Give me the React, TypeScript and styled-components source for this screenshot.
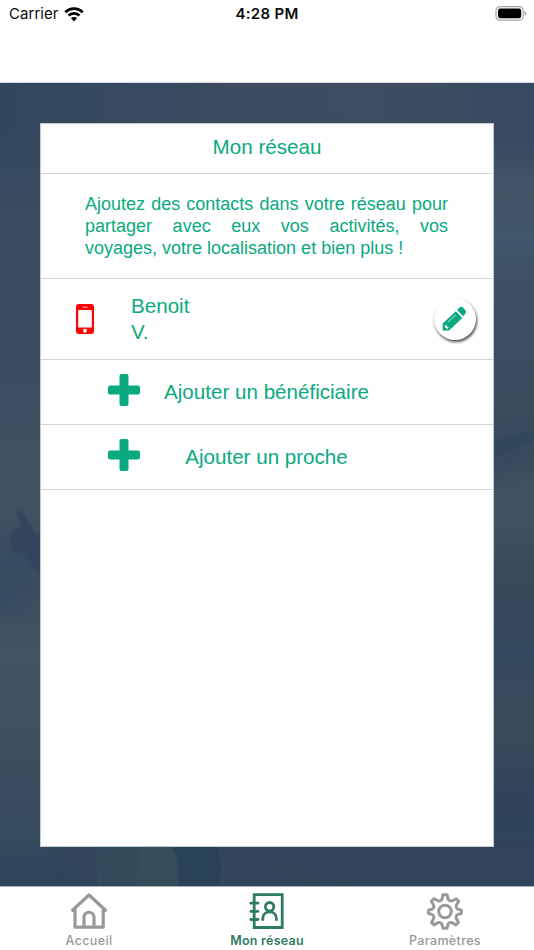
import React from "react";
import styled, { createGlobalStyle } from "styled-components";

const GREEN = "#09aa80";
const TAB_GREEN = "#2f7a65";
const TAB_GREY = "#999999";
const LINE = "#d3d3d5";

const GlobalStyle = createGlobalStyle`
  * { box-sizing: border-box; }
  body { margin: 0; background: #fff; }
  button { border: 0; padding: 0; background: none; font: inherit; color: inherit; }
`;

const Screen = styled.div`
  display: flex;
  flex-direction: column;
  width: 534px;
  height: 950px;
  overflow: hidden;
  background: #fff;
  font-family: "Liberation Sans", Arial, sans-serif;
`;

const StatusBar = styled.header`
  display: grid;
  flex-shrink: 0;
  grid-template-columns: 1fr auto 1fr;
  align-items: center;
  height: 28px;
  padding: 0 7px 0 9px;
  font: 400 15px/20px Inter, sans-serif;
  color: #0c0c0c;
`;

const Carrier = styled.div`
  display: flex;
  align-items: center;
  gap: 5px;
  letter-spacing: 0.05px;
`;

const Clock = styled.time`
  margin-right: 2px;
  font-weight: 600;
  letter-spacing: 0.3px;
`;

const Battery = styled.div`
  display: flex;
  justify-content: flex-end;
  padding-bottom: 1px;
`;

const NavBar = styled.div`
  flex-shrink: 0;
  height: 55px;
  border-bottom: 1px solid #d6d6d6;
`;

const Stage = styled.main`
  position: relative;
  flex: 1;
  padding: 40px 40px 39px;
  background: #394c60;
`;

const Scenery = styled.svg`
  position: absolute;
  inset: 0;
  width: 100%;
  height: 100%;
`;

const Card = styled.section`
  position: relative;
  height: 724px;
  border: 1px solid #c5cad0;
  background: #fff;
  color: ${GREEN};
`;

const Title = styled.h1`
  display: flex;
  align-items: center;
  justify-content: center;
  height: 50px;
  margin: 0;
  padding-bottom: 3px;
  border-bottom: 1px solid ${LINE};
  font-size: 20.6px;
  font-weight: 400;
`;

const Intro = styled.p`
  height: 105px;
  margin: 0;
  padding: 19px 45px 0 44px;
  border-bottom: 1px solid ${LINE};
  font-size: 18px;
  line-height: 22px;
  text-align: justify;
`;

const ContactRow = styled.div`
  display: flex;
  align-items: center;
  height: 81px;
  padding: 0 17px 0 34px;
  border-bottom: 1px solid ${LINE};
`;

const ContactName = styled.div`
  width: 80px;
  margin: 0 auto 0 36px;
  font-size: 20.6px;
  line-height: 26px;
`;

const EditButton = styled.button`
  display: grid;
  place-items: center;
  width: 42px;
  height: 42px;
  border-radius: 50%;
  background: #fff;
  box-shadow: 1px 2px 3px rgba(0, 0, 0, 0.7);
`;

const AddRow = styled.button`
  display: grid;
  grid-template-columns: 34px 1fr;
  align-items: center;
  width: 100%;
  height: 65px;
  padding: 0 108px 0 66px;
  border-bottom: 1px solid ${LINE};
  font-size: 20.6px;
  text-align: center;
`;

const AddLabel = styled.span`
  margin-left: 7px;
  padding-bottom: 1px;
  white-space: nowrap;
`;

const PlusIcon = styled.svg`
  display: block;
  margin-bottom: 4px;
`;

const TabBar = styled.nav`
  display: grid;
  flex-shrink: 0;
  grid-template-columns: repeat(3, 1fr);
  height: 64px;
  border-top: 1px solid #a7adb7;
`;

const Tab = styled.button<{ $active?: boolean }>`
  display: flex;
  flex-direction: column;
  align-items: center;
  padding-top: 5px;
  color: ${(p) => (p.$active ? TAB_GREEN : TAB_GREY)};
  font: ${(p) => (p.$active ? 600 : 500)} 12.5px/18px Inter, sans-serif;
  letter-spacing: ${(p) => (p.$active ? 0.25 : 0.36)}px;

  svg { display: block; margin-bottom: 2px; }
`;

const introText =
  "Ajoutez des contacts dans votre réseau pour partager avec eux vos activités, vos voyages,\u00a0votre localisation et bien plus !";

const addActions = ["Ajouter un bénéficiaire", "Ajouter un proche"];

const Wifi = () => (
  <svg width="20" height="15" viewBox="0 0 20 15" fill="none" stroke="#000" strokeWidth="2.8">
    <path d="M1.3 5.2C6.2.5 13.8.5 18.7 5.2" />
    <path d="M4.5 8.6c3.1-3 7.9-3 11 0" />
    <path d="M6.900 11.100c1.800-1.600 4.400-1.600 6.200 0L10 14.500z" fill="#000" stroke="none" />
  </svg>
);

const BatteryIcon = () => (
  <svg width="32" height="15" viewBox="0 0 32 15">
    <rect x="1" y=".6" width="27.2" height="13.6" rx="4" fill="none" stroke="#a5a5a5" strokeWidth="1.2" />
    <rect x="3" y="2.6" width="23.2" height="9.6" rx="2.2" />
    <path d="M29.700 5v4.800c2-.8 2-4 0-4.800z" fill="#999" />
  </svg>
);

const Background = () => (
  <Scenery viewBox="0 0 534 803" preserveAspectRatio="none" aria-hidden="true">
    <defs>
      <linearGradient id="left" x2="0" y2="1">
        <stop offset="0" stopColor="#32475e" />
        <stop offset=".18" stopColor="#3a4c60" />
        <stop offset=".36" stopColor="#3b4e61" />
        <stop offset=".52" stopColor="#43525f" />
        <stop offset=".6" stopColor="#374b60" />
        <stop offset=".71" stopColor="#43535f" />
        <stop offset=".83" stopColor="#3e4f5e" />
        <stop offset=".94" stopColor="#364a5e" />
        <stop offset="1" stopColor="#30445a" />
      </linearGradient>
      <linearGradient id="right" x2="0" y2="1">
        <stop offset="0" stopColor="#384a61" />
        <stop offset=".07" stopColor="#3b4d62" />
        <stop offset=".14" stopColor="#435565" />
        <stop offset=".2" stopColor="#40566a" />
        <stop offset=".24" stopColor="#3f5062" />
        <stop offset=".43" stopColor="#3a4c5c" />
        <stop offset=".53" stopColor="#43525f" />
        <stop offset=".62" stopColor="#3a4959" />
        <stop offset=".71" stopColor="#34485d" />
        <stop offset=".8" stopColor="#3b4b59" />
        <stop offset=".89" stopColor="#31445a" />
        <stop offset="1" stopColor="#31445a" />
      </linearGradient>
      <linearGradient id="top">
        <stop offset="0" stopColor="#32475e" />
        <stop offset=".3" stopColor="#384a60" />
        <stop offset=".45" stopColor="#3d4c60" />
        <stop offset=".7" stopColor="#3e4d61" />
        <stop offset="1" stopColor="#384a61" />
      </linearGradient>
      <linearGradient id="fade" x2="0" y2="1">
        <stop offset="0" stopColor="#fff" />
        <stop offset=".4" stopColor="#fff" />
        <stop offset="1" stopColor="#000" />
      </linearGradient>
      <mask id="topMask"><path d="M0 0h534v90H0z" fill="url(#fade)" /></mask>
      <filter id="soft"><feGaussianBlur stdDeviation="1.1" /></filter>
      <filter id="cloud" x="-50%" y="-50%" width="200%" height="200%"><feGaussianBlur stdDeviation="7" /></filter>
    </defs>
    <path d="M0 0h267v803H0z" fill="url(#left)" />
    <path d="M267 0h267v803H267z" fill="url(#right)" />
    <path d="M0 0h534v90H0z" fill="url(#top)" mask="url(#topMask)" />
    <g filter="url(#cloud)">
      <ellipse cx="2" cy="512" rx="18" ry="12" fill="#32475f" opacity=".6" />
      <path d="M490 363l44-18v25l-44 26z" fill="#31465a" opacity=".6" />
      <path d="M60 750h540v110H60z" fill="#31445a" />
    </g>
    <g filter="url(#soft)">
      <path d="M17 429c2-3 6-1 7 3l11 20 5-2v41l-13-16-2-5-10 1c-5-6-6-19-3-23l9-5z" fill="#30455b" />
      <path d="M494 359l7-4 8 1c8-4 16-6 25-6v7l-40 15z" fill="#31465a" />
      <path d="M99 753h122v55H99z" fill="#304858" />
      <path d="M142 753h29c8 11 10 34 9 55h-43c0-21 4-39 5-55z" fill="#384d5a" />
      <path d="M166 753h47c12 15 12 37 7 55h-42c1-25-2-43-12-55z" fill="#2b4259" />
      <path d="M101 753c-4 14-4 37 0 55M141 753c-4 18-6 35-3 55M213 753c12 16 11 38 7 55" fill="none" stroke="#3b505e" strokeWidth="1.6" />
      <path d="M278 783l12 3 10 7 10-5 5 10M336 795l8 5" fill="none" stroke="#394a5a" strokeWidth="1.5" />
    </g>
  </Scenery>
);

const Phone = () => (
  <svg width="20" height="32" viewBox="0 0 20 32">
    <rect x="1" y="1" width="18" height="30" rx="3" fill="#fd0000" />
    <rect x="3.2" y="7" width="13.6" height="17.5" fill="#fff" />
    <path d="M8 4.200h4" stroke="#ffb5b5" strokeWidth="1" strokeLinecap="round" />
    <circle cx="10" cy="27.700" r="2" fill="#fff" />
  </svg>
);

const Pencil = () => (
  <svg width="26" height="26" viewBox="0 0 26 26">
    <path d="M.7 17.400L13.800 5.200l6.500 6.900L7 24.500H.7z" fill={GREEN} />
    <path d="M15 4l2.700-2.500c1-.9 2.300-.9 3.300.1l2.300 2.700c1 1.100.9 2.400-.1 3.400l-2 2.600z" fill={GREEN} />
    <path d="M2.800 19.200l2 .1.300 1.700 1.800.4-1.600 1.500-2.500-2z" fill="#fff" />
    <path d="M5.800 16.300L13.800 8.900" stroke="#8bd4bf" strokeWidth="1.2" />
  </svg>
);

const HomeIcon = () => (
  <svg width="38" height="38" viewBox="0 0 38 38" fill="none" stroke="currentColor" strokeWidth="3.2" strokeLinecap="round" strokeLinejoin="round">
    <path d="M2.500 18.200L19 3l16.500 15.200M5 17.500v17.700h28.200V17.500M14 35v-9.500c0-7 10-7 10 0V35" />
  </svg>
);

const ContactsIcon = () => (
  <svg width="38" height="38" viewBox="0 0 38 38" fill="none" stroke="currentColor" strokeWidth="2.8">
    <path d="M6.200 2.700h28v32.800h-28z" />
    <path d="M2.800 11.200h7.200M2.800 19.300h7.200M2.800 27.500h7.200" strokeLinecap="round" />
    <circle cx="21.6" cy="14.7" r="4.2" />
    <path d="M14.800 28.800v-2.400c0-8.800 13.600-8.800 13.600 0v2.400" />
  </svg>
);

const GearIcon = () => (
  <svg width="38" height="38" viewBox="0 0 38 38" fill="none" stroke="currentColor" strokeWidth="3" strokeLinejoin="round">
    <path d="M17 2.700h4l1.100 4.200c.8 2 3 2.700 4.800 1.600l3.300-1.800 2.500 2.500-2.100 3.600c-1 1.900-.2 4 1.700 4.500l3.100.8v3.400l-3.200.9c-2 .5-2.700 2.700-1.600 4.600l1.800 3.400-2.500 2.500-3.500-2c-1.800-1-4-.2-4.500 1.700l-.9 3.700h-4l-1-3.700c-.5-2-2.700-2.800-4.500-1.700l-3.500 2-2.500-2.500 1.900-3.400c1-1.900.3-4.100-1.700-4.600l-3.100-.9v-3.400l3.100-.8c2-.5 2.700-2.600 1.700-4.500L5.300 9.200l2.500-2.500 3.500 1.800c1.800 1.100 4 .4 4.700-1.600z" />
    <circle cx="19" cy="19.5" r="6.3" />
  </svg>
);

export default function App() {
  return (
    <Screen>
      <GlobalStyle />
      <StatusBar>
        <Carrier>Carrier<Wifi /></Carrier>
        <Clock>4:28 PM</Clock>
        <Battery><BatteryIcon /></Battery>
      </StatusBar>
      <NavBar />
      <Stage>
        <Background />
        <Card>
          <Title>Mon réseau</Title>
          <Intro>{introText}</Intro>
          <ContactRow>
            <Phone />
            <ContactName>Benoit<br />V.</ContactName>
            <EditButton aria-label="Modifier"><Pencil /></EditButton>
          </ContactRow>
          {addActions.map((label) => (
            <AddRow key={label}>
              <PlusIcon width="34" height="34" viewBox="0 0 34 34" fill={GREEN}>
                <rect x="12.5" y="1" width="9" height="32" rx="2" />
                <rect x="1" y="12.5" width="32" height="9" rx="2" />
              </PlusIcon>
              <AddLabel>{label}</AddLabel>
            </AddRow>
          ))}
        </Card>
      </Stage>
      <TabBar>
        <Tab><HomeIcon />Accueil</Tab>
        <Tab $active><ContactsIcon />Mon réseau</Tab>
        <Tab><GearIcon />Paramètres</Tab>
      </TabBar>
    </Screen>
  );
}
